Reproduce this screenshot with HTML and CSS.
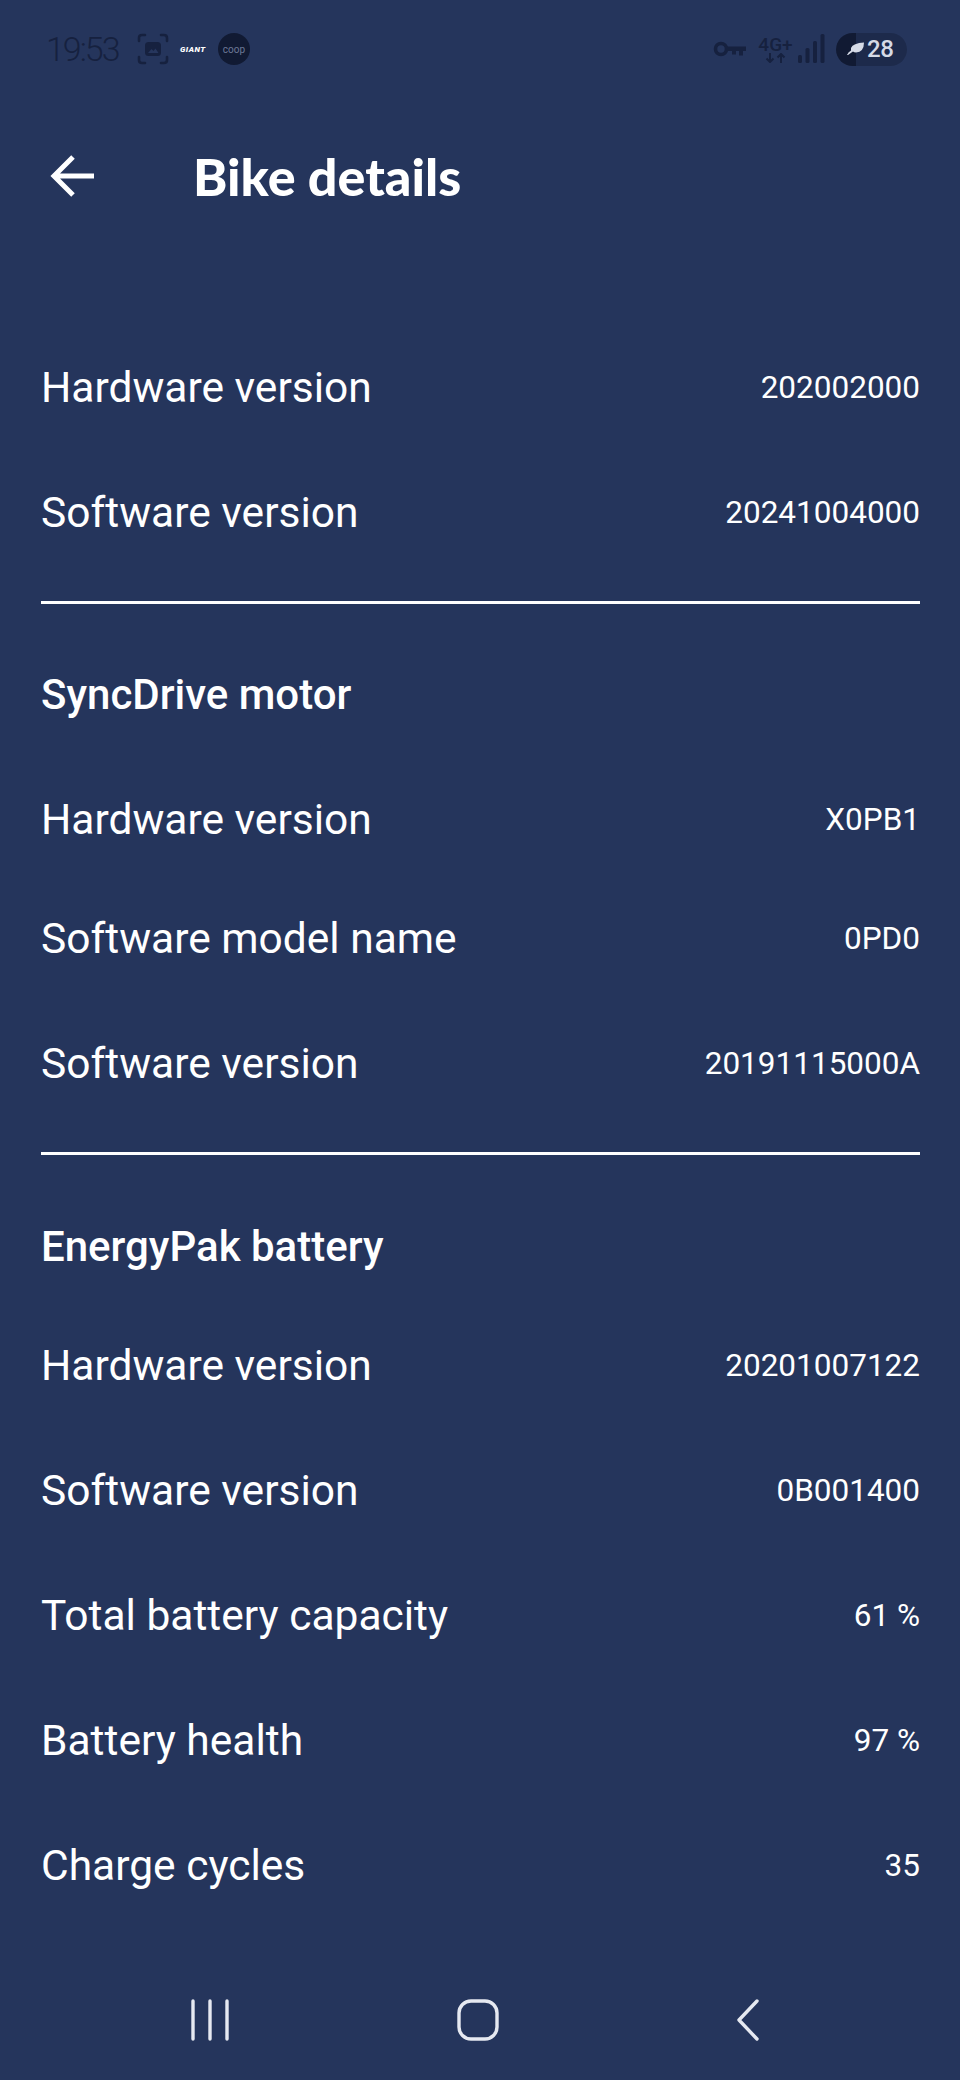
FILE: index.html
```html
<!DOCTYPE html>
<html>

<head>
    <meta content="text/html; charset=utf-8" http-equiv="Content-Type">
    <title>Bike details</title>
    <link rel="stylesheet" href="styles.css">
</head>

<body>
    <div class="mainContainer">
        <div class="statusBar">
            <div class="statusLeft">
                <span class="clock">19:53</span>
                <svg class="shotIcon" width="32" height="32" viewBox="0 0 32 32">
                    <path d="M8 2H5Q2 2 2 5V8M24 2H27Q30 2 30 5V8M2 24V27Q2 30 5 30H8M30 24V27Q30 30 27 30H24" fill="none" stroke="#16213f" stroke-width="2.6" stroke-linecap="round"/>
                    <rect x="8" y="9" width="16" height="14" rx="3.5" fill="#16213f"/>
                    <path d="M11 20L14.5 16L16.5 18L18.500 15.500L21.500 20Z" fill="#26365d"/>
                </svg>
                <span class="giantLogo">GIANT</span>
                <span class="coopLogo">coop</span>
            </div>
            <div class="statusRight">
                <svg class="keyIcon" width="34" height="18" viewBox="0 0 34 18">
                    <circle cx="8" cy="9" r="5.500" fill="none" stroke="#16213f" stroke-width="3.600"/>
                    <path d="M14 6.500H33V11H30V15.500H26V11H23V14.500H19V11H14Z" fill="#16213f"/>
                </svg>
                <div class="netType">
                    <span class="netLabel">4G+</span>
                    <svg width="21" height="10" viewBox="0 0 21 10">
                        <path d="M5 0V9M1.500 5.500L5 9L8.500 5.500M16 10V1M12.500 4.500L16 1L19.500 4.500" fill="none" stroke="#16213f" stroke-width="2"/>
                    </svg>
                </div>
                <svg class="signalIcon" width="27" height="30" viewBox="0 0 27 30">
                    <rect x="0" y="21" width="4" height="8" rx="1.500" fill="#16213f"/>
                    <rect x="7.500" y="14" width="4" height="15" rx="1.500" fill="#16213f"/>
                    <rect x="15" y="7" width="4" height="22" rx="1.500" fill="#16213f"/>
                    <rect x="22.500" y="0" width="4" height="29" rx="1.500" fill="#16213f"/>
                </svg>
                <div class="batteryPill">
                    <svg class="leafIcon" width="18" height="14" viewBox="0 0 18 14">
                        <path d="M4 6Q6 1 17 0.500Q17 10 9 10.500Q7 10.500 6 9.500L1 13H0Q1 10 4 8.500Z" fill="#d5dae6"/>
                    </svg>
                    <span class="batteryLevel">28</span>
                </div>
            </div>
        </div>

        <div class="appBar">
            <svg class="backArrow" width="44" height="44" viewBox="0 0 44 44">
                <path d="M23 3L4 22L23 41M4 22H44" fill="none" stroke="#fff" stroke-width="5"/>
            </svg>
            <span class="pageTitle">Bike details</span>
        </div>

        <div class="detailList">
            <div class="detailRow"><span>Hardware version</span><span class="detailValue">202002000</span></div>
            <div class="detailRow"><span>Software version</span><span class="detailValue">20241004000</span></div>
            <div class="divider"></div>
            <div class="sectionTitle">SyncDrive motor</div>
            <div class="detailRow"><span>Hardware version</span><span class="detailValue">X0PB1</span></div>
            <div class="detailRow shortRow"><span>Software model name</span><span class="detailValue">0PD0</span></div>
            <div class="detailRow"><span>Software version</span><span class="detailValue">20191115000A</span></div>
            <div class="divider"></div>
            <div class="sectionTitle compactTitle">EnergyPak battery</div>
            <div class="detailRow"><span>Hardware version</span><span class="detailValue">20201007122</span></div>
            <div class="detailRow"><span>Software version</span><span class="detailValue">0B001400</span></div>
            <div class="detailRow"><span>Total battery capacity</span><span class="detailValue">61 %</span></div>
            <div class="detailRow"><span>Battery health</span><span class="detailValue">97 %</span></div>
            <div class="detailRow"><span>Charge cycles</span><span class="detailValue">35</span></div>
        </div>

        <div class="navBar">
            <svg width="42" height="42" viewBox="0 0 42 42">
                <path d="M4 2V40M21 2V40M38 2V40" fill="none" stroke="#e6e9f1" stroke-width="3.400" stroke-linecap="round"/>
            </svg>
            <svg width="42" height="42" viewBox="0 0 42 42">
                <rect x="2" y="2" width="38" height="38" rx="12" fill="none" stroke="#e6e9f1" stroke-width="3.400"/>
            </svg>
            <svg width="42" height="42" viewBox="0 0 42 42">
                <path d="M32 2L14 21L32 40" fill="none" stroke="#e6e9f1" stroke-width="3.400" stroke-linecap="round" stroke-linejoin="round"/>
            </svg>
        </div>
    </div>
</body>

</html>
```
FILE: styles.css
```css
html, body {
    margin: 0;
    padding: 0;
    background: #25355c;
}

.mainContainer {
    width: 960px;
    height: 2080px;
    overflow: hidden;
    color: #fff;
    font-family: Roboto, "Noto Sans", sans-serif;
}

.statusBar {
    display: flex;
    justify-content: space-between;
    align-items: center;
    height: 98px;
    padding: 0 53px 0 46px;
    color: #16213f;
}

.statusLeft, .statusRight {
    display: flex;
    align-items: center;
}

.clock {
    font-size: 34px;
    font-weight: 300;
    letter-spacing: -2px;
    width: 91px;
}

.giantLogo {
    width: 38px;
    margin-left: 11px;
    font-size: 8px;
    font-weight: 900;
    font-style: italic;
    letter-spacing: 0.5px;
    color: #fff;
}

.coopLogo {
    display: flex;
    justify-content: center;
    align-items: center;
    width: 32px;
    height: 32px;
    border-radius: 50%;
    background: #111a33;
    color: #6d7896;
    font-size: 10px;
}

.netType {
    display: flex;
    flex-direction: column;
    align-items: center;
    margin-left: 10px;
    width: 37px;
}

.netLabel {
    font-size: 19px;
    font-weight: 500;
    line-height: 17px;
}

.signalIcon {
    margin-left: 4px;
}

.batteryPill {
    display: flex;
    align-items: center;
    width: 71px;
    height: 33px;
    margin-left: 11px;
    padding-left: 11px;
    box-sizing: border-box;
    border-radius: 17px;
    background: linear-gradient(90deg, #111a33 20px, #1d2a4b 20px);
}

.batteryLevel {
    margin-left: 2px;
    color: #d5dae6;
    font-size: 24px;
    font-weight: 500;
    letter-spacing: -0.5px;
}

.appBar {
    display: flex;
    align-items: center;
    height: 156px;
    padding-left: 50px;
}

.pageTitle {
    margin-left: 99px;
    font-family: Lato, sans-serif;
    font-size: 52px;
    font-weight: 900;
}

.detailList {
    padding: 71px 40px 0 41px;
    height: 1706px;
    box-sizing: border-box;
}

.detailRow {
    display: flex;
    justify-content: space-between;
    align-items: center;
    height: 125px;
    font-size: 42.500px;
}

.shortRow {
    height: 113px;
    margin-bottom: 6px;
}

.detailValue {
    font-size: 31.500px;
}

.divider {
    height: 3px;
    margin-top: 26px;
    background: #fff;
}

.sectionTitle {
    display: flex;
    align-items: center;
    height: 125px;
    margin-top: 28px;
    font-size: 42px;
    font-weight: 500;
}

.compactTitle {
    height: 113px;
    margin-top: 35px;
}

.navBar {
    display: flex;
    justify-content: space-between;
    align-items: center;
    height: 120px;
    padding: 0 193px 0 189px;
}
```
